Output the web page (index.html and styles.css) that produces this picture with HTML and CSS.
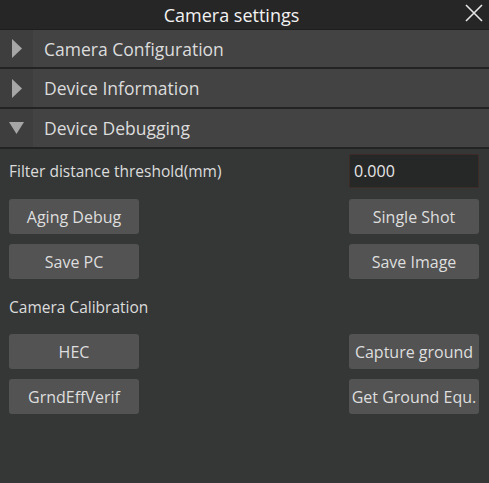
FILE: index.html
```html
<!DOCTYPE html>
<html>
<head>
<meta charset="utf-8">
<link rel="stylesheet" href="styles.css">
</head>
<body>
<div class="window">
  <div class="titlebar">
    <span class="title">Camera settings</span>
    <svg class="close" width="18" height="18" viewBox="0 0 18 18"><path d="M1 1L17 17M17 1L1 17" stroke="#e6e6e6" stroke-width="1.6" fill="none"/></svg>
  </div>
  <div class="section first">
    <div class="arrow"><svg width="10" height="19" viewBox="0 0 10 19"><path d="M0 0L10 9.5L0 19Z" fill="#a6a6a6"/></svg></div>
    <div class="label">Camera Configuration</div>
  </div>
  <div class="section">
    <div class="arrow"><svg width="10" height="19" viewBox="0 0 10 19"><path d="M0 0L10 9.5L0 19Z" fill="#a6a6a6"/></svg></div>
    <div class="label">Device Information</div>
  </div>
  <div class="section">
    <div class="arrow"><svg width="15" height="12" viewBox="0 0 15 12"><path d="M0 0L15 0L7.5 12Z" fill="#a6a6a6"/></svg></div>
    <div class="label">Device Debugging</div>
  </div>
  <div class="content">
    <div class="row field-row">
      <span class="text">Filter distance threshold(mm)</span>
      <div class="input">0.000</div>
    </div>
    <div class="row btn-row">
      <div class="btn">Aging Debug</div>
      <div class="btn">Single Shot</div>
    </div>
    <div class="row btn-row">
      <div class="btn">Save PC</div>
      <div class="btn">Save Image</div>
    </div>
    <div class="row heading-row">
      <span class="text">Camera Calibration</span>
    </div>
    <div class="row btn-row tight">
      <div class="btn">HEC</div>
      <div class="btn">Capture ground</div>
    </div>
    <div class="row btn-row">
      <div class="btn">GrndEffVerif</div>
      <div class="btn">Get Ground Equ.</div>
    </div>
  </div>
</div>
</body>
</html>
```
FILE: styles.css
```css
html, body {
  margin: 0;
  padding: 0;
  background: #353737;
}
.window {
  width: 489px;
  height: 483px;
  background: #353737;
  font-family: "Open Sans", "Noto Sans", sans-serif;
  color: #e2e2e2;
  overflow: hidden;
}
.titlebar {
  height: 29px;
  background: #262626;
  border-bottom: 1px solid #1e1e1e;
  display: flex;
  align-items: center;
  justify-content: center;
  padding-right: 26px;
  position: relative;
}
.title {
  font-size: 18px;
  color: #f2f2f2;
}
.close {
  position: absolute;
  right: 6px;
  top: 4px;
}
.section {
  height: 38px;
  background: #434343;
  border-bottom: 2px solid #232323;
  display: flex;
  align-items: stretch;
}
.section.first {
  height: 37px;
}
.arrow {
  width: 33px;
  background: #3e3e3e;
  display: flex;
  align-items: center;
  justify-content: center;
}
.label {
  display: flex;
  align-items: center;
  padding-left: 11px;
  font-size: 17.5px;
  color: #dcdcdc;
}
.content {
  padding: 5px 10px 0 9px;
  display: flex;
  flex-direction: column;
}
.row {
  display: flex;
  justify-content: space-between;
  align-items: center;
}
.field-row {
  height: 34px;
}
.text {
  font-size: 15.5px;
  color: #dcdcdc;
}
.input {
  box-sizing: border-box;
  width: 130px;
  height: 34px;
  background: #262727;
  border: 1px solid #3d2b28;
  border-radius: 2px;
  display: flex;
  align-items: center;
  padding-left: 4px;
  font-size: 16px;
  color: #e6e6e6;
}
.btn-row {
  margin-top: 10px;
}
.field-row + .btn-row {
  margin-top: 11px;
}
.btn {
  width: 130px;
  height: 35px;
  background: #535353;
  border-radius: 3px;
  display: flex;
  align-items: center;
  justify-content: center;
  font-size: 16px;
  color: #dedede;
}
.heading-row {
  height: 55px;
}
.btn-row.tight {
  margin-top: 0;
}
```
